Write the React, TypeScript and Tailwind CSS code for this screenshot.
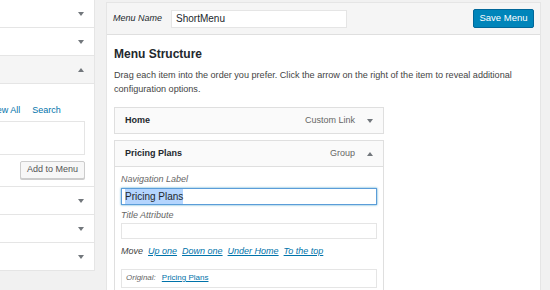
import { ReactNode } from "react";

function Caret({ up = false }: { up?: boolean }) {
  return (
    <svg width="6" height="4" viewBox="0 0 6 4" className="shrink-0">
      {up ? <path d="M0 4 L3 0 L6 4 Z" fill="#72777c" /> : <path d="M0 0 L6 0 L3 4 Z" fill="#72777c" />}
    </svg>
  );
}

function SideRow({ children, gray = false }: { children?: ReactNode; gray?: boolean }) {
  return (
    <div className={`flex h-[28px] items-center justify-end border-b border-[#e5e5e5] pr-[10px] ${gray ? "bg-[#f5f5f5]" : "bg-white"}`}>
      {children}
    </div>
  );
}

function MenuItem({ title, type, open = false }: { title: string; type: string; open?: boolean }) {
  return (
    <div className="flex h-[27px] items-center border border-[#dfdfdf] bg-[#fafafa] pl-[10px] pr-[8px]">
      <span className="text-[9px] font-bold text-[#23282d]">{title}</span>
      <span className="ml-auto text-[9px] text-[#666]">{type}</span>
      <span className="ml-[10px] flex w-[10px] justify-center">
        <Caret up={open} />
      </span>
    </div>
  );
}

export default function App() {
  return (
    <div className="flex h-[290px] w-[550px] overflow-hidden bg-[#f1f1f1] font-['Liberation_Sans',Arial,sans-serif] text-[#444]">
      {/* left accordion */}
      <div className="w-[95px] shrink-0 self-start border-r border-[#e5e5e5] bg-white">
        <SideRow>
          <Caret />
        </SideRow>
        <SideRow>
          <Caret />
        </SideRow>
        <SideRow gray>
          <Caret up />
        </SideRow>
        <div className="h-[103px] overflow-hidden border-b border-[#e5e5e5] pt-[20px]">
          <div className="ml-[-11px] flex gap-[12px] whitespace-nowrap text-[9px] text-[#0073aa]">
            <span>View All</span>
            <span>Search</span>
          </div>
          <div className="ml-[-10px] mt-[3px] h-[34px] w-[95px] border border-[#e5e5e5] bg-white"></div>
          <div className="mt-[6px] flex justify-end pr-[9px]">
            <div className="flex h-[18px] items-center rounded-[2px] border border-[#cccccc] bg-[#f7f7f7] px-[6px] text-[9px] text-[#555] shadow-[0_1px_0_#ccc]">
              Add to Menu
            </div>
          </div>
        </div>
        <SideRow>
          <Caret />
        </SideRow>
        <SideRow>
          <Caret />
        </SideRow>
        <SideRow>
          <Caret />
        </SideRow>
      </div>

      {/* right menu editor */}
      <div className="ml-[11px] mt-[2px] flex w-[435px] shrink-0 flex-col self-start border border-[#e5e5e5] bg-white">
        <div className="flex h-[32px] shrink-0 items-center border-b border-[#dfdfdf] bg-[#f5f5f5] pl-[6px] pr-[6px]">
          <span className="text-[9px] italic text-[#23282d]">Menu Name</span>
          <div className="ml-[9px] flex h-[18px] w-[176px] items-center border border-[#e5e5e5] bg-white px-[4px] text-[10px] text-[#23282d]">
            ShortMenu
          </div>
          <div className="ml-auto flex h-[19px] w-[61px] items-center justify-center rounded-[2px] border border-[#006799] bg-[#0085ba] text-[9.5px] text-white">
            Save Menu
          </div>
        </div>
        <div className="pl-[7px] pr-[14px]">
          <div className="mt-[10px] text-[12px] font-semibold text-[#23282d]">Menu Structure</div>
          <p className="mt-[5px] text-[9.1px] leading-[14px] text-[#444]">
            Drag each item into the order you prefer. Click the arrow on the right of the item to reveal additional configuration options.
          </p>
          <div className="mt-[11px] w-[270px]">
            <MenuItem title="Home" type="Custom Link" />
            <div className="mt-[6px]">
              <MenuItem title="Pricing Plans" type="Group" open />
              <div className="border border-t-0 border-[#dfdfdf] bg-white px-[6px] pb-[10px] pt-[6px]">
                <div className="text-[9px] italic text-[#666]">Navigation Label</div>
                <div className="mt-[1px] flex h-[17px] items-center border border-[#5b9dd9] px-[3px] shadow-[0_0_2px_rgba(30,140,190,0.8)]">
                  <span className="bg-[#b4d5fe] text-[10px] text-[#23282d]">Pricing Plans</span>
                </div>
                <div className="mt-[4px] text-[9px] italic text-[#666]">Title Attribute</div>
                <div className="mt-[1px] h-[16px] border border-[#e5e5e5]"></div>
                <div className="mt-[6px] flex gap-[5px] text-[9px]">
                  <span className="italic text-[#444]">Move</span>
                  <span className="italic text-[#0073aa] underline">Up one</span>
                  <span className="italic text-[#0073aa] underline">Down one</span>
                  <span className="italic text-[#0073aa] underline">Under Home</span>
                  <span className="italic text-[#0073aa] underline">To the top</span>
                </div>
                <div className="mt-[10px] flex h-[19px] items-center gap-[6px] border border-[#e5e5e5] px-[4px] text-[8px]">
                  <span className="italic text-[#666]">Original:</span>
                  <span className="text-[#0073aa] underline">Pricing Plans</span>
                </div>
              </div>
            </div>
          </div>
        </div>
      </div>
    </div>
  );
}
